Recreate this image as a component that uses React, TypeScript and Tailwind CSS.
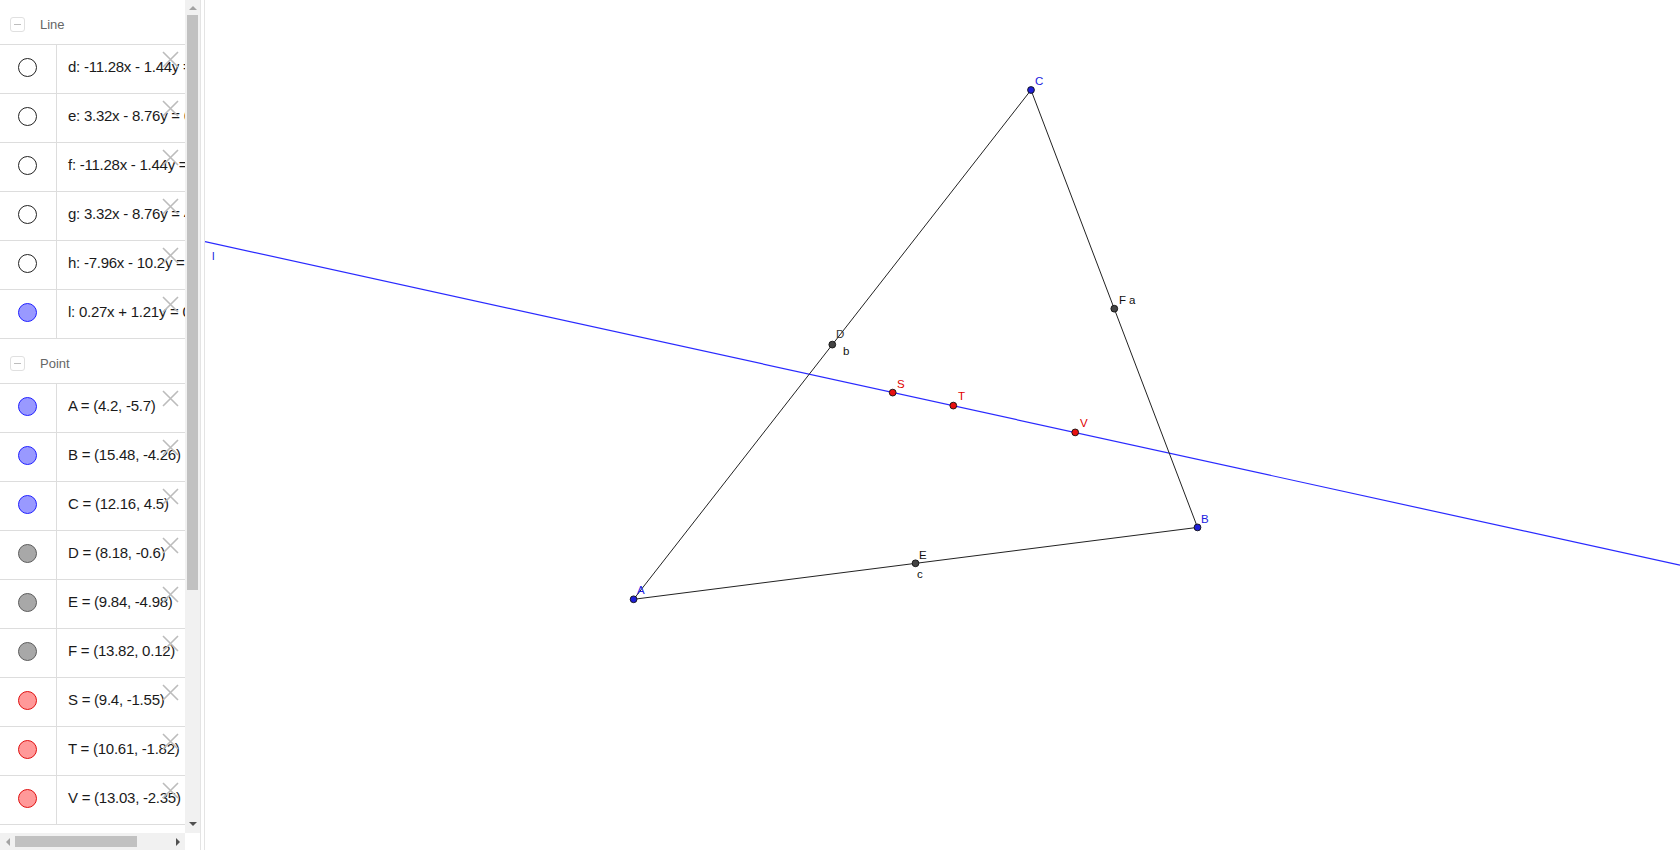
const lineRows = [
  { text: 'd: -11.28x - 1.44y = -60.17', fill: 'bg-white', border: 'border-[#222]' },
  { text: 'e: 3.32x - 8.76y = 63.87', fill: 'bg-white', border: 'border-[#222]' },
  { text: 'f: -11.28x - 1.44y = -147.01', fill: 'bg-white', border: 'border-[#222]' },
  { text: 'g: 3.32x - 8.76y = 41.18', fill: 'bg-white', border: 'border-[#222]' },
  { text: 'h: -7.96x - 10.2y = -59.01', fill: 'bg-white', border: 'border-[#222]' },
  { text: 'l: 0.27x + 1.21y = 0.65', fill: 'bg-[#9999ff]', border: 'border-[#2020ff]' },
];

const blue = { fill: 'bg-[#9999ff]', border: 'border-[#2020ff]' };
const gray = { fill: 'bg-[#a8a8a8]', border: 'border-[#5c5c5c]' };
const red = { fill: 'bg-[#ff9999]', border: 'border-[#e01010]' };

const pointRows = [
  { text: 'A = (4.2, -5.7)', ...blue },
  { text: 'B = (15.48, -4.26)', ...blue },
  { text: 'C = (12.16, 4.5)', ...blue },
  { text: 'D = (8.18, -0.6)', ...gray },
  { text: 'E = (9.84, -4.98)', ...gray },
  { text: 'F = (13.82, 0.12)', ...gray },
  { text: 'S = (9.4, -1.55)', ...red },
  { text: 'T = (10.61, -1.82)', ...red },
  { text: 'V = (13.03, -2.35)', ...red },
];

const Header = ({ label }: { label: string }) => (
  <div className="flex h-[45px] items-center gap-[15px] border-b border-[#dddddd] pl-[10px] pt-[5px]">
    <div className="flex h-[15px] w-[15px] items-center justify-center rounded-[3px] border border-[#e0e0e0]">
      <div className="h-px w-[7px] bg-[#bdbdbd]" />
    </div>
    <span className="text-[13px] text-[#666666]">{label}</span>
  </div>
);

const Row = ({ text, fill, border }: { text: string; fill: string; border: string }) => (
  <div className="flex h-[49px] border-b border-[#dddddd]">
    <div className="flex w-[57px] shrink-0 items-center justify-center border-r border-[#dddddd] pb-[3px] pr-px">
      <div className={`h-[19px] w-[19px] rounded-full border ${fill} ${border}`} />
    </div>
    <div className="relative flex flex-1 items-center overflow-hidden whitespace-nowrap pb-[3px] pl-[11px]">
      <span className="text-[15px] tracking-[-0.25px] text-[#1a1a1a]">{text}</span>
      <svg className="absolute right-[6px] top-[6px]" width="17" height="17" viewBox="0 0 17 17">
        <path d="M1 1 L16 16 M16 1 L1 16" stroke="#bcbcbc" strokeWidth="1.6" fill="none" />
      </svg>
    </div>
  </div>
);

type Pt = { x: number; y: number };
const P: Record<string, Pt> = {
  A: { x: 633.6, y: 599.3 },
  B: { x: 1197.5, y: 527.4 },
  C: { x: 1031, y: 90 },
  D: { x: 832.3, y: 344.6 },
  E: { x: 915.5, y: 563.3 },
  F: { x: 1114.3, y: 308.7 },
  S: { x: 892.7, y: 392.6 },
  T: { x: 953.3, y: 405.6 },
  V: { x: 1075.2, y: 432.4 },
};

const labels = [
  { t: 'C', x: 1035, y: 84.5, c: '#2020e0' },
  { t: 'A', x: 637, y: 594, c: '#2020e0' },
  { t: 'B', x: 1201, y: 522.5, c: '#2020e0' },
  { t: 'D', x: 836, y: 338, c: '#333333' },
  { t: 'b', x: 843, y: 355, c: '#111111' },
  { t: 'E', x: 919, y: 558.5, c: '#111111' },
  { t: 'c', x: 917, y: 578, c: '#111111' },
  { t: 'F', x: 1119, y: 303.5, c: '#111111' },
  { t: 'a', x: 1129, y: 303.5, c: '#111111' },
  { t: 'S', x: 897, y: 387.5, c: '#e00000' },
  { t: 'T', x: 958, y: 399.5, c: '#e00000' },
  { t: 'V', x: 1080, y: 426.5, c: '#e00000' },
  { t: 'l', x: 212, y: 260, c: '#2020e0' },
];

const dot = (name: string, fill: string) => (
  <circle key={name} cx={P[name].x} cy={P[name].y} r="3.4" fill={fill} stroke="#111" strokeWidth="0.9" />
);

export default function App() {
  return (
    <div className="flex h-[850px] w-[1680px] overflow-hidden bg-white font-['Liberation_Sans',Arial,sans-serif]">
      {/* algebra view */}
      <div className="flex h-full w-[200px] shrink-0 flex-col">
        <div className="flex h-[833px]">
          <div className="w-[185px] overflow-hidden">
            <Header label="Line" />
            {lineRows.map((r) => (
              <Row key={r.text} {...r} />
            ))}
            <Header label="Point" />
            {pointRows.map((r) => (
              <Row key={r.text} {...r} />
            ))}
          </div>
          <div className="flex w-[15px] flex-col bg-[#f1f1f1]">
            <div className="flex h-[15px] items-center justify-center">
              <div className="h-0 w-0 border-x-[4px] border-b-[4px] border-x-transparent border-b-[#a3a3a3]" />
            </div>
            <div className="mx-[2px] h-[575px] bg-[#c1c1c1]" />
            <div className="flex-1" />
            <div className="flex h-[18px] items-center justify-center">
              <div className="h-0 w-0 border-x-[4px] border-t-[4px] border-x-transparent border-t-[#505050]" />
            </div>
          </div>
        </div>
        <div className="flex h-[17px]">
          <div className="flex w-[185px] items-center bg-[#f1f1f1]">
            <div className="flex w-[15px] justify-center">
              <div className="h-0 w-0 border-y-[4px] border-r-[4px] border-y-transparent border-r-[#a3a3a3]" />
            </div>
            <div className="h-[11px] w-[122px] bg-[#c1c1c1]" />
            <div className="flex-1" />
            <div className="flex w-[15px] justify-center">
              <div className="h-0 w-0 border-y-[4px] border-l-[4px] border-y-transparent border-l-[#505050]" />
            </div>
          </div>
          <div className="w-[15px] bg-white" />
        </div>
      </div>
      {/* splitter */}
      <div className="w-[5px] shrink-0 border-x border-[#e4e4e4] bg-white" />
      {/* graphics view */}
      <div className="relative flex-1">
        <svg width="1475" height="850" viewBox="0 0 1475 850" className="block">
          <g transform="translate(-205 0)">
            <line x1="205" y1="241.6" x2="1680" y2="565.2" stroke="#2a2aff" strokeWidth="1.2" />
            <polygon
              points={`${P.A.x},${P.A.y} ${P.B.x},${P.B.y} ${P.C.x},${P.C.y}`}
              fill="none"
              stroke="#222"
              strokeWidth="1"
            />
            {dot('D', '#444')}
            {dot('E', '#444')}
            {dot('F', '#444')}
            {dot('S', '#e81010')}
            {dot('T', '#e81010')}
            {dot('V', '#e81010')}
            {dot('A', '#1f1fd8')}
            {dot('B', '#1f1fd8')}
            {dot('C', '#1f1fd8')}
            {labels.map((l) => (
              <text
                key={l.t}
                x={l.x}
                y={l.y}
                fill={l.c}
                fontSize="11.5"
                fontFamily="'Liberation Sans', Arial, sans-serif"
              >
                {l.t}
              </text>
            ))}
          </g>
        </svg>
      </div>
    </div>
  );
}
